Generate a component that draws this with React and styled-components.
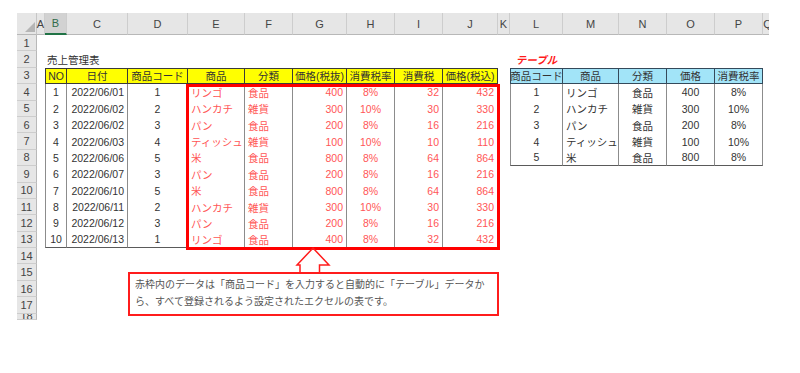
import React from 'react';
import styled, { createGlobalStyle } from 'styled-components';

const GlobalStyle = createGlobalStyle`
  html, body { margin: 0; padding: 0; background: #fff; }
  body { font-family: "Liberation Sans", "Noto Sans CJK JP", sans-serif; }
  #root { width: 800px; height: 373px; }
`;

const ROW_H = 16.4;
const COLUMNS = [
  { key: 'A', w: 8 }, { key: 'B', w: 22 }, { key: 'C', w: 61 }, { key: 'D', w: 60 },
  { key: 'E', w: 57 }, { key: 'F', w: 48 }, { key: 'G', w: 54 }, { key: 'H', w: 48 },
  { key: 'I', w: 48 }, { key: 'J', w: 55 }, { key: 'K', w: 12 }, { key: 'L', w: 53 },
  { key: 'M', w: 56 }, { key: 'N', w: 48 }, { key: 'O', w: 48 }, { key: 'P', w: 48 },
  { key: 'Q', w: 10 },
];
const colIndex = (k) => COLUMNS.findIndex((c) => c.key === k) + 2;

const Page = styled.div`
  width: 800px;
  height: 373px;
  background: #fff;
  padding: 13px 0 0 17px;
  box-sizing: border-box;
  overflow: hidden;
`;

const Sheet = styled.div`
  position: relative;
  width: 752px;
  overflow: hidden;
  display: grid;
  grid-template-columns: 20px ${COLUMNS.map((c) => `${c.w}px`).join(' ')};
  grid-template-rows: 22px repeat(17, ${ROW_H}px) 6px;
  color: #333;
`;

const Corner = styled.div`
  grid-column: 1;
  grid-row: 1;
  background: #e6e6e6;
  border-right: 1px solid #c6c6c6;
  border-bottom: 1px solid #b8b8b8;
  box-sizing: border-box;
  display: flex;
  align-items: flex-end;
  justify-content: flex-end;
  padding: 0 1px 2px 0;
`;

const CornerTriangle = styled.div`
  width: 0;
  height: 0;
  border-left: 10px solid transparent;
  border-bottom: 10px solid #b5b5b5;
`;

const ColHead = styled.div`
  grid-column: ${(p) => p.$col};
  grid-row: 1;
  background: ${(p) => (p.$selected ? '#d2d2d2' : '#e6e6e6')};
  border-right: 1px solid #cdcdcd;
  border-bottom: ${(p) => (p.$selected ? '2px solid #217346' : '1px solid #b8b8b8')};
  box-sizing: border-box;
  display: flex;
  align-items: center;
  justify-content: center;
  font-size: 11px;
  color: ${(p) => (p.$selected ? '#2f6b4a' : '#444')};
  overflow: visible;
  white-space: nowrap;
`;

const RowHead = styled.div`
  grid-column: 1;
  grid-row: ${(p) => p.$row};
  background: #e6e6e6;
  border-right: 1px solid #b8b8b8;
  border-bottom: 1px solid #cdcdcd;
  box-sizing: border-box;
  display: flex;
  align-items: center;
  justify-content: center;
  font-size: 11px;
  color: #444;
  overflow: hidden;
`;

const Label = styled.div`
  grid-column: ${(p) => p.$col};
  grid-row: ${(p) => p.$row};
  display: flex;
  align-items: center;
  justify-content: ${(p) => (p.$center ? 'center' : 'flex-start')};
  padding-left: ${(p) => (p.$center ? 0 : 2)}px;
  font-size: ${(p) => (p.$accent ? 10.5 : 10.5)}px;
  font-weight: ${(p) => (p.$accent ? 700 : 400)};
  font-style: ${(p) => (p.$accent ? 'italic' : 'normal')};
  color: ${(p) => (p.$accent ? '#ff1a1a' : '#333')};
  white-space: nowrap;
`;

const TableGrid = styled.div`
  grid-column: ${(p) => p.$cols};
  grid-row: ${(p) => p.$rows};
  display: grid;
  grid-template-columns: ${(p) => p.$template};
  grid-auto-rows: ${ROW_H}px;
`;

const Cell = styled.div`
  display: flex;
  align-items: center;
  justify-content: ${(p) =>
    p.$align === 'right' ? 'flex-end' : p.$align === 'left' ? 'flex-start' : 'center'};
  padding: 0 3px;
  box-sizing: border-box;
  white-space: nowrap;
  font-size: 10.5px;
  color: ${(p) => (p.$red ? '#ff5656' : '#333')};
  background: ${(p) => p.$bg || 'transparent'};
  border-right: 1px solid ${(p) => (p.$head ? p.$line : '#8c8c8c')};
  border-left: ${(p) => (p.$first ? `1px solid ${p.$head ? p.$line : '#8c8c8c'}` : 'none')};
  border-top: ${(p) => (p.$head ? `1px solid ${p.$line}` : 'none')};
  border-bottom: ${(p) => (p.$head || p.$last ? `1px solid ${p.$head ? p.$line : '#5a5a5a'}` : 'none')};
`;

const RedFrame = styled.div`
  position: absolute;
  left: 169px;
  top: 70.5px;
  width: 314px;
  height: 166px;
  border: 3px solid #ff0000;
  box-sizing: border-box;
  pointer-events: none;
`;

const ArrowSvg = styled.svg`
  position: absolute;
  left: 278px;
  top: 233px;
  width: 37px;
  height: 28px;
  overflow: visible;
`;

const Callout = styled.div`
  position: absolute;
  left: 111px;
  top: 259px;
  width: 371px;
  height: 44px;
  box-sizing: border-box;
  border: 2px solid #ff1c1c;
  background: #fff;
  padding: 1px 5px;
  font-family: "Noto Sans CJK JP", sans-serif;
  font-size: 10px;
  line-height: 17px;
  color: #555;
`;

const ledgerHeaders = ['NO', '日付', '商品コード', '商品', '分類', '価格(税抜)', '消費税率', '消費税', '価格(税込)'];
const ledgerAlign = ['center', 'right', 'center', 'left', 'left', 'right', 'center', 'right', 'right'];
const ledger = [
  [1, '2022/06/01', 1, 'リンゴ', '食品', 400, '8%', 32, 432],
  [2, '2022/06/02', 2, 'ハンカチ', '雑貨', 300, '10%', 30, 330],
  [3, '2022/06/02', 3, 'パン', '食品', 200, '8%', 16, 216],
  [4, '2022/06/03', 4, 'ティッシュ', '雑貨', 100, '10%', 10, 110],
  [5, '2022/06/06', 5, '米', '食品', 800, '8%', 64, 864],
  [6, '2022/06/07', 3, 'パン', '食品', 200, '8%', 16, 216],
  [7, '2022/06/10', 5, '米', '食品', 800, '8%', 64, 864],
  [8, '2022/06/11', 2, 'ハンカチ', '雑貨', 300, '10%', 30, 330],
  [9, '2022/06/12', 3, 'パン', '食品', 200, '8%', 16, 216],
  [10, '2022/06/13', 1, 'リンゴ', '食品', 400, '8%', 32, 432],
];

const masterHeaders = ['商品コード', '商品', '分類', '価格', '消費税率'];
const masterAlign = ['center', 'left', 'center', 'center', 'center'];
const master = [
  [1, 'リンゴ', '食品', 400, '8%'],
  [2, 'ハンカチ', '雑貨', 300, '10%'],
  [3, 'パン', '食品', 200, '8%'],
  [4, 'ティッシュ', '雑貨', 100, '10%'],
  [5, '米', '食品', 800, '8%'],
];

function SheetTable({ cols, rows, widths, headers, align, data, headBg, line, redFrom }) {
  return (
    <TableGrid $cols={cols} $rows={rows} $template={widths.map((w) => `${w}px`).join(' ')}>
      {headers.map((h, i) => (
        <Cell key={`h${i}`} $head $first={i === 0} $bg={headBg} $line={line}>
          {h}
        </Cell>
      ))}
      {data.map((row, r) =>
        row.map((v, i) => (
          <Cell
            key={`${r}-${i}`}
            $align={align[i]}
            $first={i === 0}
            $last={r === data.length - 1}
            $red={redFrom !== undefined && i >= redFrom}
          >
            {v}
          </Cell>
        ))
      )}
    </TableGrid>
  );
}

export default function App() {
  const w = (k) => COLUMNS.find((c) => c.key === k).w;
  return (
    <Page>
      <GlobalStyle />
      <Sheet>
        <Corner>
          <CornerTriangle />
        </Corner>
        {COLUMNS.map((c) => (
          <ColHead key={c.key} $col={colIndex(c.key)} $selected={c.key === 'B'}>
            {c.key}
          </ColHead>
        ))}
        {Array.from({ length: 18 }, (_, i) => (
          <RowHead key={i} $row={i + 2}>
            {i + 1}
          </RowHead>
        ))}

        <Label $col={`${colIndex('B')} / span 3`} $row={3}>売上管理表</Label>
        <Label $col={`${colIndex('L')}`} $row={3} $center $accent>テーブル</Label>

        <SheetTable
          cols={`${colIndex('B')} / ${colIndex('K')}`}
          rows={`4 / span 11`}
          widths={['B', 'C', 'D', 'E', 'F', 'G', 'H', 'I', 'J'].map(w)}
          headers={ledgerHeaders}
          align={ledgerAlign}
          data={ledger}
          headBg="#ffff00"
          line="#3a3a3a"
          redFrom={3}
        />

        <SheetTable
          cols={`${colIndex('L')} / ${colIndex('Q')}`}
          rows={`4 / span 6`}
          widths={['L', 'M', 'N', 'O', 'P'].map(w)}
          headers={masterHeaders}
          align={masterAlign}
          data={master}
          headBg="#a2e4f8"
          line="#34495a"
        />

        <RedFrame />

        <ArrowSvg viewBox="0 0 37 28">
          <polygon
            points="18,2 34,19 24.5,19 24.5,27 5,27 5,19 2,19"
            fill="#fff"
            stroke="#ff1c1c"
            strokeWidth="1.5"
            strokeLinejoin="miter"
          />
        </ArrowSvg>

        <Callout>
          赤枠内のデータは「商品コード」を入力すると自動的に「テーブル」データか
          <br />
          ら、すべて登録されるよう設定されたエクセルの表です。
        </Callout>
      </Sheet>
    </Page>
  );
}
